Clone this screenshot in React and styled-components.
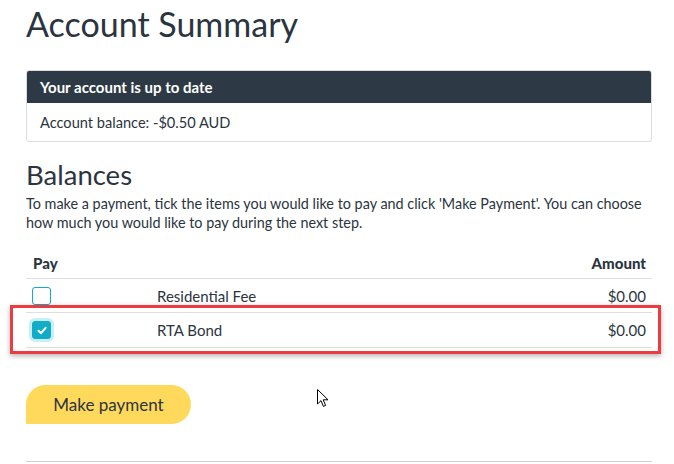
import React from "react";
import styled, { createGlobalStyle } from "styled-components";

const GlobalStyle = createGlobalStyle`
  body {
    margin: 0;
    background: #fff;
    font-family: Lato, "Noto Sans", sans-serif;
    color: #2b3540;
  }
`;

const Page = styled.div`
  position: relative;
  width: 626px;
  margin-left: 26px;
  padding-top: 4px;
`;

const Title = styled.h1`
  margin: 0;
  font-size: 34px;
  line-height: 40px;
  font-weight: 400;
  color: #2b3540;
`;

const Card = styled.div`
  margin-top: 26px;
  border: 1px solid #dcdcdc;
  border-radius: 3px;
  overflow: hidden;
`;

const CardHeader = styled.div`
  background: #2d3a45;
  color: #fff;
  font-weight: 700;
  font-size: 15px;
  height: 32px;
  display: flex;
  align-items: center;
  padding: 0 13px;
`;

const CardBody = styled.div`
  height: 38px;
  display: flex;
  align-items: center;
  padding: 0 13px;
  font-size: 14.6px;
`;

const SubTitle = styled.h2`
  margin: 18px 0 0;
  font-size: 27.5px;
  line-height: 30px;
  font-weight: 400;
`;

const Intro = styled.p`
  margin: 4px 0 0;
  font-size: 14.4px;
  line-height: 19px;
`;

const Table = styled.div`
  margin-top: 15px;
  display: flex;
  flex-direction: column;
`;

const Row = styled.div`
  position: relative;
  display: grid;
  grid-template-columns: 131px 1fr auto;
  align-items: center;
  height: ${(p) => p.$h}px;
  border-bottom: 1px solid #dedede;
  padding-right: 6px;
  font-size: 15px;
  font-weight: ${(p) => (p.$head ? 900 : 400)};
`;

const HeadCell = styled.div`
  padding-left: 7px;
`;

const Highlight = styled.div`
  position: absolute;
  top: -8px;
  left: -16px;
  right: -9px;
  bottom: -7px;
  border: 3px solid #ee3b40;
  box-shadow: 0 2px 5px rgba(0, 0, 0, 0.3);
  pointer-events: none;
`;

const CheckCell = styled.div`
  padding-left: 6px;
  display: flex;
  align-items: center;
`;

const Box = styled.span`
  width: 19px;
  height: 18px;
  box-sizing: border-box;
  border-radius: 3px;
  display: flex;
  align-items: center;
  justify-content: center;
  border: 1.5px solid #11acc8;
  background: ${(p) => (p.$on ? "#11acc8" : "#fff")};
  box-shadow: ${(p) => (p.$on ? "0 0 0 3px #c9eff6" : "none")};
`;

const Button = styled.button`
  margin-top: 37px;
  width: 165px;
  height: 39px;
  border: none;
  background: #ffd95c;
  border-radius: 20px 20px 20px 0;
  font-family: Lato, "Noto Sans", sans-serif;
  font-size: 17px;
  color: #2b3540;
  padding: 0;
  cursor: pointer;
`;

const Rule = styled.hr`
  margin: 37px 0 0;
  border: none;
  border-top: 1px solid #cfcfcf;
`;

const Cursor = styled.svg`
  position: absolute;
  left: 291px;
  top: 389px;
`;

const Check = ({ on }) => (
  <Box $on={on}>
    {on && (
      <svg width="10" height="9" viewBox="0 0 10 9">
        <path d="M1.5 4.8 L4 7.2 L8.6 1.8" fill="none" stroke="#fff" strokeWidth="2" strokeLinecap="round" strokeLinejoin="round" />
      </svg>
    )}
  </Box>
);

const items = [
  { name: "Residential Fee", amount: "$0.00", on: false },
  { name: "RTA Bond", amount: "$0.00", on: true },
];

export default function App() {
  return (
    <>
      <GlobalStyle />
      <Page>
        <Title>Account Summary</Title>
        <Card>
          <CardHeader>Your account is up to date</CardHeader>
          <CardBody>Account balance: -$0.50 AUD</CardBody>
        </Card>
        <SubTitle>Balances</SubTitle>
        <Intro>
          To make a payment, tick the items you would like to pay and click 'Make Payment'. You can choose
          how much you would like to pay during the next step.
        </Intro>
        <Table>
          <Row $head $h={31}>
            <HeadCell>Pay</HeadCell>
            <div />
            <div>Amount</div>
          </Row>
          {items.map((it) => (
            <Row key={it.name} $h={it.on ? 34 : 33}>
              <CheckCell>
                <Check on={it.on} />
              </CheckCell>
              <div>{it.name}</div>
              <div>{it.amount}</div>
              {it.on && <Highlight />}
            </Row>
          ))}
        </Table>
        <Button>Make payment</Button>
        <Rule />
        <Cursor width="12" height="19" viewBox="0 0 12 19">
          <path d="M0.5 0.5 L0.5 15 L4 11.6 L6.4 17.4 L8.6 16.4 L6.2 10.8 L11 10.8 Z" fill="#fff" stroke="#000" strokeWidth="1" />
        </Cursor>
      </Page>
    </>
  );
}
